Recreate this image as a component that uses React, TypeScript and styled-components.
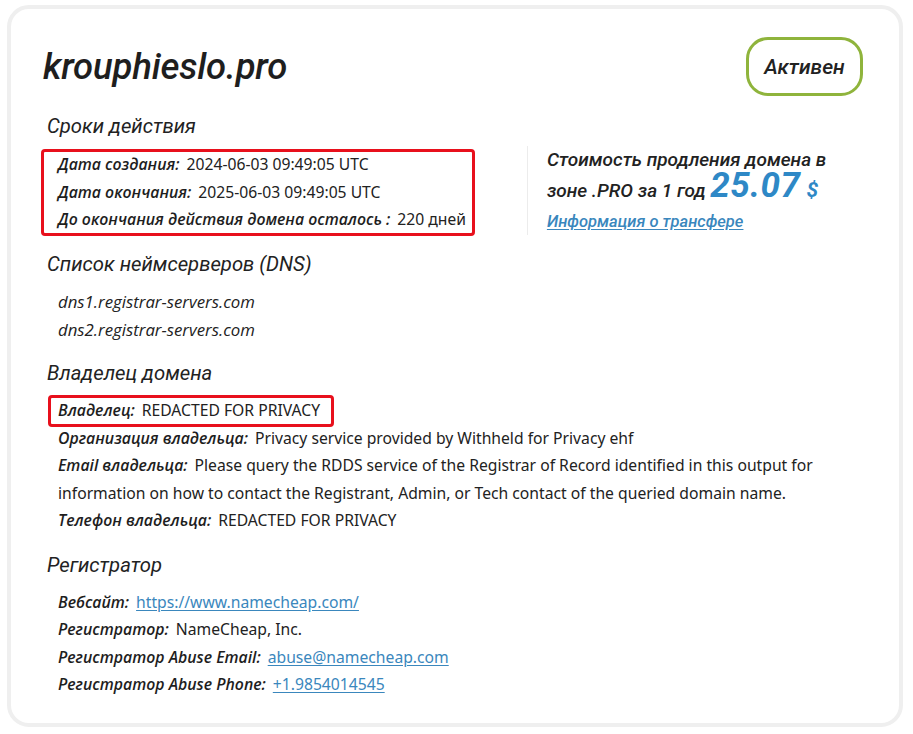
import React from "react";
import styled, { createGlobalStyle } from "styled-components";

const Global = createGlobalStyle`
  html, body { margin: 0; padding: 0; background: #ffffff; }
  body { font-family: "Noto Sans", "Open Sans", sans-serif; color: #222; }
`;

const Page = styled.div`
  padding: 5px 10px 7px 7px;
`;

const Card = styled.div`
  box-sizing: border-box;
  width: 896px;
  height: 722px;
  border: 4px solid #efefef;
  border-radius: 22px;
  background: #fff;
  padding: 28px 36px 0 32px;
`;

const Header = styled.div`
  display: flex;
  align-items: center;
  justify-content: space-between;
  height: 59px;
`;

const Title = styled.h1`
  margin: 0;
  font-family: Roboto, sans-serif;
  font-style: italic;
  font-weight: 500;
  font-size: 36.5px;
  line-height: 44px;
  color: #1e1e1e;
  letter-spacing: -0.2px;
`;

const Badge = styled.div`
  box-sizing: border-box;
  width: 117px;
  height: 59px;
  border: 3px solid #8fb43c;
  border-radius: 22px;
  display: flex;
  align-items: center;
  justify-content: center;
  font-family: Roboto, sans-serif;
  font-style: italic;
  font-weight: 500;
  font-size: 21px;
  color: #222;
`;

const Section = styled.section<{ $top: number }>`
  margin-top: ${(p) => p.$top}px;
`;

const Heading = styled.h2`
  margin: 0 0 10px 4px;
  font-family: Roboto, sans-serif;
  font-style: italic;
  font-weight: 400;
  font-size: 20.3px;
  line-height: 28px;
  color: #222;
`;

const Split = styled.div`
  display: flex;
  align-items: flex-start;
  padding-top: 1px;
`;

const Rows = styled.div`
  padding-left: 15px;
`;

const Marked = styled.div<{ $pl: number; $pr: number }>`
  display: inline-block;
  vertical-align: top;
  padding: 0 ${(p) => p.$pr}px 0 ${(p) => p.$pl}px;
  outline: 3px solid #e8101c;
  outline-offset: -1px;
  border-radius: 2px;
`;

const Row = styled.div`
  font-size: 15.7px;
  line-height: 27.5px;
  white-space: nowrap;
`;

const WrapRow = styled(Row)`
  white-space: normal;
  max-width: 770px;
`;

const Label = styled.span`
  font-family: "Open Sans", sans-serif;
  font-style: italic;
  font-weight: 600;
  font-size: 15.8px;
  line-height: 1;
  color: #1e1e1e;
  margin-right: 7px;
`;

const Plain = styled.div`
  font-family: "Open Sans", sans-serif;
  font-style: italic;
  font-weight: 400;
  font-size: 16.8px;
  line-height: 27.5px;
  color: #222;
`;

const Link = styled.a`
  color: #3a87bd;
  text-decoration: underline;
  text-underline-offset: 2px;
`;

const Price = styled.div`
  margin: -5px 0 0 54px;
  padding: 0 0 0 19px;
  border-left: 1px solid #ececec;
  font-family: Roboto, sans-serif;
  font-style: italic;
  font-weight: 500;
  font-size: 19px;
  line-height: 28px;
  color: #222;
`;

const PriceLine = styled.div<{ $pt?: number }>`
  padding-top: ${(p) => p.$pt ?? 0}px;
`;

const Amount = styled.span`
  font-weight: 700;
  font-size: 35px;
  line-height: 0;
  color: #2e88c6;
  letter-spacing: 0.5px;
`;

const Currency = styled.span`
  font-weight: 700;
  font-size: 21px;
  line-height: 0;
  color: #2e88c6;
  margin-left: 6px;
`;

const TransferLink = styled.a`
  display: block;
  margin-top: 4px;
  font-size: 16.5px;
  line-height: 26px;
  color: #3a87bd;
  text-decoration: underline;
  text-underline-offset: 2px;
`;

export default function App() {
  return (
    <Page>
      <Global />
      <Card>
        <Header>
          <Title>krouphieslo.pro</Title>
          <Badge>Активен</Badge>
        </Header>

        <Section $top={16}>
          <Heading>Сроки действия</Heading>
          <Split>
            <Marked $pl={15} $pr={7}>
              <Row>
                <Label>Дата создания:</Label>2024-06-03 09:49:05 UTC
              </Row>
              <Row>
                <Label>Дата окончания:</Label>2025-06-03 09:49:05 UTC
              </Row>
              <Row>
                <Label>До окончания действия домена осталось :</Label>220 дней
              </Row>
            </Marked>
            <Price>
              <PriceLine>Стоимость продления домена в</PriceLine>
              <PriceLine $pt={3}>
                зоне .PRO за 1 год <Amount>25.07</Amount>
                <Currency>$</Currency>
              </PriceLine>
              <TransferLink href="#">Информация о трансфере</TransferLink>
            </Price>
          </Split>
        </Section>

        <Section $top={15}>
          <Heading>Список неймсерверов (DNS)</Heading>
          <Rows>
            <Plain>dns1.registrar-servers.com</Plain>
            <Plain>dns2.registrar-servers.com</Plain>
          </Rows>
        </Section>

        <Section $top={16}>
          <Heading>Владелец домена</Heading>
          <Rows>
            <Marked $pl={8} $pr={12} style={{ marginLeft: -8 }}>
              <Row>
                <Label>Владелец:</Label>REDACTED FOR PRIVACY
              </Row>
            </Marked>
            <Row>
              <Label>Организация владельца:</Label>Privacy service provided by Withheld for Privacy ehf
            </Row>
            <WrapRow>
              <Label>Email владельца:</Label>Please query the RDDS service of the Registrar of Record identified in this output for information on how to contact the Registrant, Admin, or Tech contact of the queried domain name.
            </WrapRow>
            <Row>
              <Label>Телефон владельца:</Label>REDACTED FOR PRIVACY
            </Row>
          </Rows>
        </Section>

        <Section $top={16}>
          <Heading>Регистратор</Heading>
          <Rows>
            <Row>
              <Label>Вебсайт:</Label>
              <Link href="#">https://www.namecheap.com/</Link>
            </Row>
            <Row>
              <Label>Регистратор:</Label>NameCheap, Inc.
            </Row>
            <Row>
              <Label>Регистратор Abuse Email:</Label>
              <Link href="#">abuse@namecheap.com</Link>
            </Row>
            <Row>
              <Label>Регистратор Abuse Phone:</Label>
              <Link href="#">+1.9854014545</Link>
            </Row>
          </Rows>
        </Section>
      </Card>
    </Page>
  );
}
